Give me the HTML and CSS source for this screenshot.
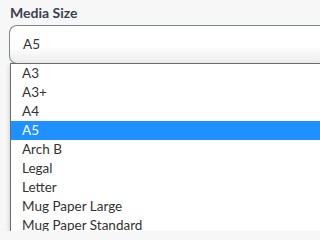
FILE: index.html
```html
<!DOCTYPE html>
<html>
<head>
<meta charset="utf-8">
<link rel="stylesheet" href="styles.css">
</head>
<body>
<div class="field">
  <div class="label">Media Size</div>
  <div class="select-wrap">
    <div class="select">A5</div>
    <ul class="menu">
      <li>A3</li>
      <li>A3+</li>
      <li>A4</li>
      <li class="active">A5</li>
      <li>Arch B</li>
      <li>Legal</li>
      <li>Letter</li>
      <li>Mug Paper Large</li>
      <li>Mug Paper Standard</li>
    </ul>
  </div>
</div>
</body>
</html>
```
FILE: styles.css
```css
html, body {
  margin: 0;
  padding: 0;
  background: #f7f7f7;
  overflow: hidden;
}
body {
  font-family: Lato, "Open Sans", sans-serif;
  height: 231px;
}
.field {
  padding: 3px 0 0 10px;
}
.label {
  font-size: 14px;
  font-weight: 700;
  color: #3a4150;
  height: 22px;
  line-height: 19px;
}
.select-wrap {
  position: relative;
  margin-left: -1px;
}
.select {
  box-sizing: border-box;
  height: 39px;
  border: 1px solid #7b8a86;
  border-right: none;
  border-bottom-color: #777;
  border-radius: 8px 0 0 8px;
  background: linear-gradient(#fff 0%, #fff 55%, #ececec 100%);
  font-size: 13.5px;
  color: #333;
  padding: 0 0 0 13px;
  line-height: 37px;
}
.menu {
  position: absolute;
  left: 1px;
  right: 0;
  top: 38px;
  margin: 0;
  padding: 0;
  list-style: none;
  background: #fff;
  border: 1px solid #6b6b6b;
  border-right: none;
  box-shadow: -1px 2px 4px rgba(0,0,0,0.15);
}
.menu li {
  height: 19px;
  line-height: 19px;
  font-size: 13.5px;
  color: #333;
  padding-left: 11px;
}
.menu li.active {
  background: #1e90ff;
  color: #fff;
}
```
